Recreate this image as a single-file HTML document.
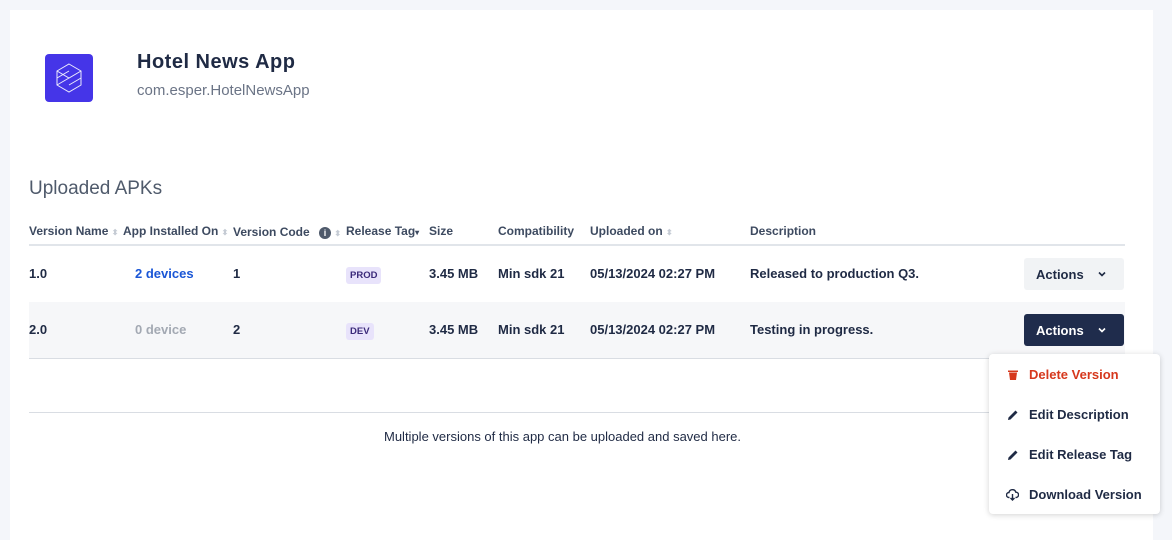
<!DOCTYPE html>
<html><head><style>
*{margin:0;padding:0;box-sizing:border-box}
body{width:1172px;height:535px;background:#f4f6fa;font-family:"Liberation Sans",sans-serif;position:relative;overflow:hidden;color:#1f2a44}
.card{position:absolute;left:10px;top:10px;width:1143px;height:530px;background:#fff}
.a{position:absolute;white-space:nowrap}
.h{font-size:12px;font-weight:bold;color:#3d4a60;top:224px}
.c{font-size:13px;font-weight:bold;color:#1f2a44}
.s{color:#c5cbd4;font-size:8px}
.tag{position:absolute;font-size:9.5px;font-weight:bold;color:#3b2a7a;background:#e8e3fb;border-radius:3px;padding:3px 4px}
.btn{position:absolute;left:1024px;width:100px;height:32px;border-radius:3px;font-size:13px;font-weight:bold;display:flex;align-items:center;padding-left:12px}
.mi{position:absolute;left:1006px;font-size:13px;font-weight:bold;color:#1f2a44;display:flex;align-items:center}
.mi svg{margin-right:10px}
</style></head><body>
<div class="card"></div>
<div class="a" style="left:45px;top:54px;width:48px;height:48px;background:#4535e8;border-radius:4px">
<svg width="48" height="48" viewBox="0 0 48 48" fill="none" stroke="#fff" stroke-width="1" opacity=".9"><path d="M24 10 L36 17 L36 31 L24 38 L12 31 L12 17 Z M12 17 L24 24 L36 17 M12 24 L24 17 M24 31 L36 24 M12 31 L24 24"/></svg></div>
<div class="a" style="left:137px;top:51px;font-size:20px;font-weight:bold;color:#1f2a44;letter-spacing:.5px">Hotel News App</div>
<div class="a" style="left:137px;top:82px;font-size:15px;color:#6b7486">com.esper.HotelNewsApp</div>
<div class="a" style="left:29px;top:178px;font-size:19px;color:#4f5a6b">Uploaded APKs</div>
<div class="a h" style="left:29px">Version Name <span class="s">⬍</span></div>
<div class="a h" style="left:123px">App Installed On <span class="s">⬍</span></div>
<div class="a h" style="left:233px;top:225px">Version Code <span style="display:inline-block;width:12px;height:12px;border-radius:6px;background:#4f5a6b;color:#fff;font-size:9px;text-align:center;line-height:12px;margin-left:6px">i</span> <span class="s">⬍</span></div>
<div class="a h" style="left:346px">Release Tag<span style="font-size:8px">▾</span></div>
<div class="a h" style="left:429px">Size</div>
<div class="a h" style="left:498px">Compatibility</div>
<div class="a h" style="left:590px">Uploaded on <span class="s">⬍</span></div>
<div class="a h" style="left:750px">Description</div>
<div class="a" style="left:29px;top:244px;width:1096px;height:2px;background:#e1e5ea"></div>
<div class="a" style="left:29px;top:302px;width:1096px;height:56px;background:#f6f7f9"></div>
<div class="a" style="left:29px;top:358px;width:1096px;height:1px;background:#d9dde3"></div>
<div class="a" style="left:29px;top:412px;width:1096px;height:1px;background:#d9dde3"></div>
<div class="a c" style="left:29px;top:266px">1.0</div>
<div class="a c" style="left:135px;top:266px;color:#1a56d6">2 devices</div>
<div class="a c" style="left:233px;top:266px">1</div>
<div class="tag" style="left:346px;top:267px">PROD</div>
<div class="a c" style="left:429px;top:266px">3.45 MB</div>
<div class="a c" style="left:498px;top:266px">Min sdk 21</div>
<div class="a c" style="left:590px;top:266px">05/13/2024 02:27 PM</div>
<div class="a c" style="left:750px;top:266px">Released to production Q3.</div>
<div class="a c" style="left:29px;top:322px">2.0</div>
<div class="a c" style="left:135px;top:322px;color:#a3a9b3">0 device</div>
<div class="a c" style="left:233px;top:322px">2</div>
<div class="tag" style="left:346px;top:323px">DEV</div>
<div class="a c" style="left:429px;top:322px">3.45 MB</div>
<div class="a c" style="left:498px;top:322px">Min sdk 21</div>
<div class="a c" style="left:590px;top:322px">05/13/2024 02:27 PM</div>
<div class="a c" style="left:750px;top:322px">Testing in progress.</div>
<div class="btn" style="top:258px;background:#f1f3f5;color:#1f2a44">Actions <svg width="8" height="6" style="margin-left:14px" viewBox="0 0 8 6"><path d="M1 1.5 L4 4.5 L7 1.5" stroke="#1f2a44" stroke-width="1.6" fill="none"/></svg></div>
<div class="btn" style="top:314px;background:#1f2c4c;color:#fff">Actions <svg width="8" height="6" style="margin-left:14px" viewBox="0 0 8 6"><path d="M1 1.5 L4 4.5 L7 1.5" stroke="#fff" stroke-width="1.6" fill="none"/></svg></div>
<div class="a" style="left:384px;top:429px;font-size:13px;color:#1f2a44">Multiple versions of this app can be uploaded and saved here.</div>
<div class="a" style="left:989px;top:354px;width:171px;height:160px;background:#fff;border-radius:4px;box-shadow:0 1px 6px rgba(0,0,0,.18)"></div>
<div class="mi" style="top:367px;color:#d6381d;left:1007px"><svg width="12" height="12" viewBox="0 0 12 12"><path d="M1 1.5 H11 V3 H1 Z M2 3.5 H10 L9 11 H3 Z" fill="#d6381d"/></svg>Delete Version</div>
<div class="mi" style="top:407px;left:1007px"><svg width="12" height="12" viewBox="0 0 12 12"><path d="M1 11 L1.5 8.5 L8.5 1.5 L10.5 3.5 L3.5 10.5 Z" fill="#1f2a44"/></svg>Edit Description</div>
<div class="mi" style="top:447px;left:1007px"><svg width="12" height="12" viewBox="0 0 12 12"><path d="M1 11 L1.5 8.5 L8.5 1.5 L10.5 3.5 L3.5 10.5 Z" fill="#1f2a44"/></svg>Edit Release Tag</div>
<div class="mi" style="top:487px;left:1006px"><svg width="13" height="12" viewBox="0 0 13 12"><path d="M3.5 8.5 H3 A2.5 2.5 0 0 1 3 3.5 A3.5 3.5 0 0 1 9.8 3.2 A2.6 2.6 0 0 1 10 8.5 H9.5" stroke="#1f2a44" stroke-width="1.4" fill="none"/><path d="M6.5 5 V11 M4.5 9 L6.5 11 L8.5 9" stroke="#1f2a44" stroke-width="1.4" fill="none"/></svg>Download Version</div>
</body></html>
